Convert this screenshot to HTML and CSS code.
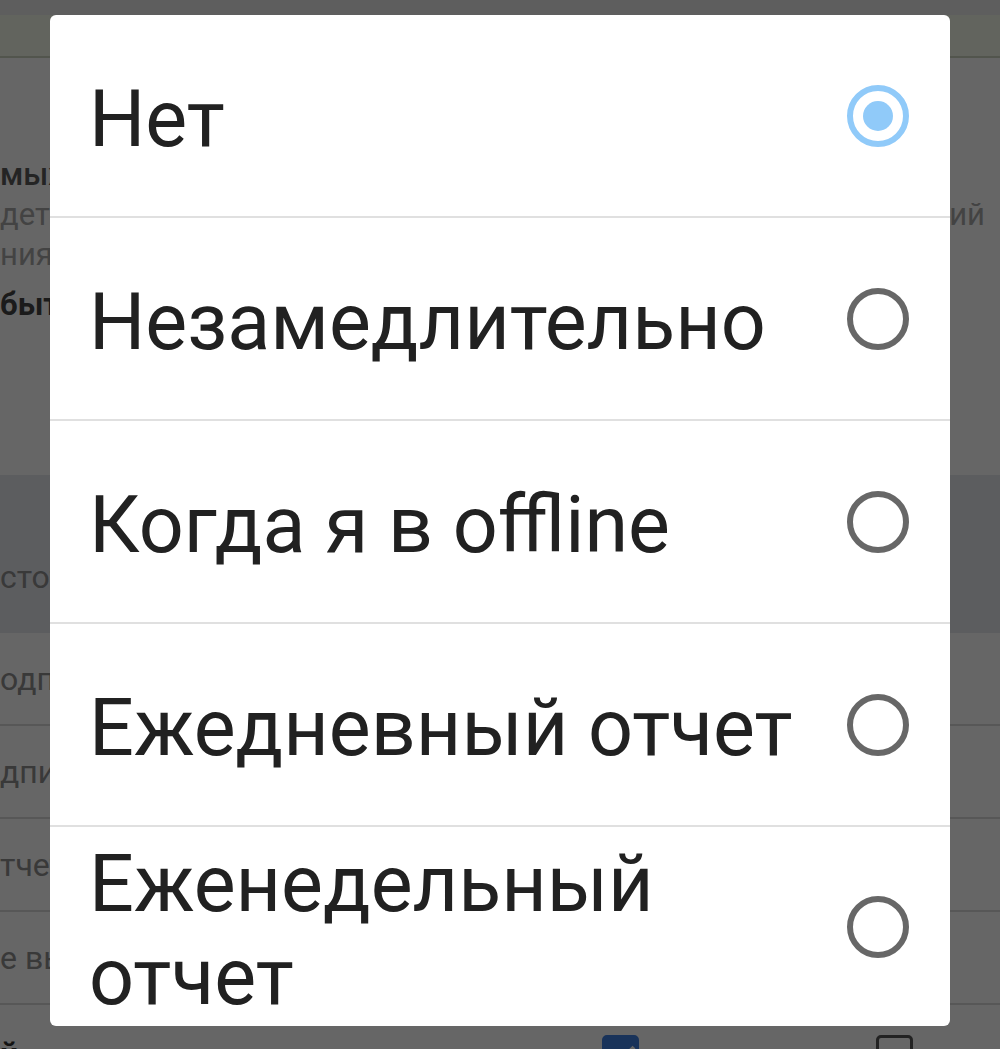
FILE: index.html
```html
<!DOCTYPE html>
<html lang="ru">
<head>
  <meta charset="UTF-8" />
  <meta name="viewport" content="width=device-width, initial-scale=1.0"/>
  <title>Уведомления</title>
  <link rel="stylesheet" href="styles.css">
</head>
<body>
  <div class="page">
    <div class="status"></div>
    <div class="banner"></div>

    <div class="intro">
      <p class="intro-title">мых сообщений</p>
      <p class="intro-note"><span>дет , если</span><span>ий</span></p>
      <p class="intro-note">ниях</p>
      <p class="intro-label">быть</p>
    </div>

    <div class="group-head"><span>стота</span></div>
    <div class="setting"><span>одписки</span></div>
    <div class="setting"><span>дписи</span></div>
    <div class="setting"><span>тчет</span></div>
    <div class="setting"><span>е вызовы</span></div>
    <div class="setting setting-checks">
      <span class="setting-strong">й</span>
      <div class="checks">
        <span class="check checked"></span>
        <span class="check"></span>
      </div>
    </div>
  </div>

  <div class="overlay">
    <div class="dialog">
      <div class="option">
        <span class="option-label">Нет</span>
        <span class="radio selected"></span>
      </div>
      <div class="option">
        <span class="option-label">Незамедлительно</span>
        <span class="radio"></span>
      </div>
      <div class="option">
        <span class="option-label">Когда я в offline</span>
        <span class="radio"></span>
      </div>
      <div class="option">
        <span class="option-label">Ежедневный отчет</span>
        <span class="radio"></span>
      </div>
      <div class="option">
        <span class="option-label">Еженедельный отчет</span>
        <span class="radio"></span>
      </div>
    </div>
  </div>
</body>
</html>
```

FILE: styles.css
```css
:root {
  --text: #212121;
  --divider: #e0e0e0;
  --radio-off: #676767;
  --radio-on: #90caf9;
}

* {
  margin: 0;
  padding: 0;
  box-sizing: border-box;
}

html, body {
  height: 100%;
  overflow: hidden;
}

body {
  background: #ffffff;
  font-family: Roboto, "Noto Sans", sans-serif;
  color: var(--text);
}

/* page behind the dialog */

.page {
  width: 1000px;
}

.status {
  height: 15px;
  background: #ececec;
}

.banner {
  height: 43px;
  background: #f5fbea;
  border-bottom: 2px solid #ccd5c0;
}

.intro {
  padding: 97px 15px 150px 0;
  font-size: 31px;
  line-height: 40px;
}

.intro-title {
  color: #5a5a5a;
  font-weight: 500;
}

.intro-note {
  display: flex;
  justify-content: space-between;
  color: #a8a8a8;
}

.intro-label {
  margin-top: 10px;
  color: #444444;
  font-weight: 700;
}

.group-head {
  height: 158px;
  background: #e7e9ee;
  display: flex;
  align-items: flex-end;
  padding-bottom: 36px;
  font-size: 32px;
  line-height: 40px;
  color: #8e8e8e;
}

.setting {
  height: 93px;
  display: flex;
  align-items: center;
  border-bottom: 2px solid #d9d9d9;
  font-size: 32px;
  color: #8e8e8e;
}

.setting-checks {
  border-bottom: none;
  padding-top: 4px;
}

.setting-strong {
  flex: 1;
  color: #333333;
  font-weight: 700;
}

.checks {
  display: flex;
  gap: 237px;
  padding-right: 87px;
}

.check {
  position: relative;
  width: 37px;
  height: 37px;
  border: 3px solid #555555;
  border-radius: 5px;
}

.check.checked {
  background: #3f7fe0;
  border-color: #3f7fe0;
}

.check.checked::after {
  content: "";
  position: absolute;
  left: 10px;
  top: 2px;
  width: 10px;
  height: 20px;
  border: solid #ffffff;
  border-width: 0 4px 4px 0;
  transform: rotate(45deg);
}

/* dialog */

.overlay {
  position: fixed;
  inset: 0;
  background: rgba(0, 0, 0, 0.6);
  display: flex;
  justify-content: center;
  align-items: flex-start;
  padding-top: 15px;
}

.dialog {
  width: 900px;
  background: #ffffff;
  border-radius: 6px;
  overflow: hidden;
}

.option {
  min-height: 203px;
  display: flex;
  align-items: center;
  gap: 20px;
  padding: 0 41px 0 39px;
  border-bottom: 2px solid var(--divider);
}

.option:last-child {
  min-height: 199px;
  border-bottom: none;
}

.option-label {
  flex: 1;
  padding-top: 8px;
  font-size: 79px;
  line-height: 93px;
  color: var(--text);
}

.radio {
  flex: none;
  width: 62px;
  height: 62px;
  border: 6px solid var(--radio-off);
  border-radius: 50%;
  display: flex;
  align-items: center;
  justify-content: center;
}

.radio.selected {
  border-color: var(--radio-on);
}

.radio.selected::after {
  content: "";
  width: 30px;
  height: 30px;
  border-radius: 50%;
  background: var(--radio-on);
}
```
